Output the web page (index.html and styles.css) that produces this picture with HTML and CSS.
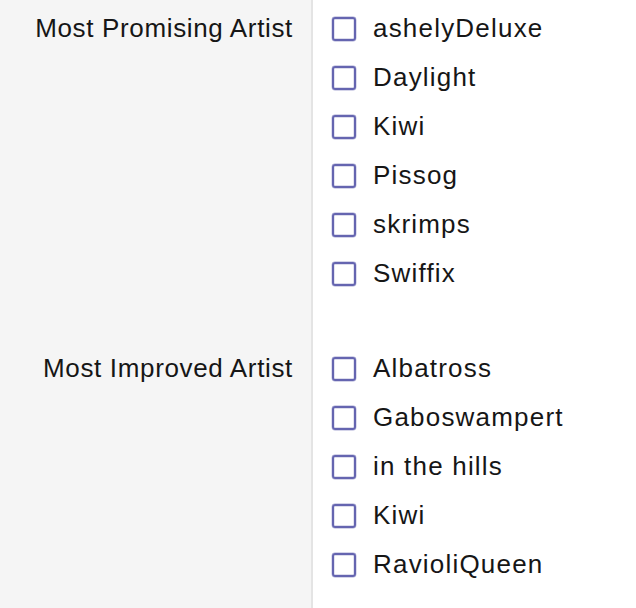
FILE: index.html
```html
<!DOCTYPE html>
<html>
<head>
<meta charset="utf-8">
<link rel="stylesheet" href="styles.css">
</head>
<body>
<div class="form">
  <section class="group">
    <div class="label">Most Promising Artist</div>
    <ul class="options">
      <li class="option"><span class="box"></span><span class="name">ashelyDeluxe</span></li>
      <li class="option"><span class="box"></span><span class="name">Daylight</span></li>
      <li class="option"><span class="box"></span><span class="name">Kiwi</span></li>
      <li class="option"><span class="box"></span><span class="name">Pissog</span></li>
      <li class="option"><span class="box"></span><span class="name">skrimps</span></li>
      <li class="option"><span class="box"></span><span class="name">Swiffix</span></li>
    </ul>
  </section>
  <section class="group">
    <div class="label">Most Improved Artist</div>
    <ul class="options">
      <li class="option"><span class="box"></span><span class="name">Albatross</span></li>
      <li class="option"><span class="box"></span><span class="name">Gaboswampert</span></li>
      <li class="option"><span class="box"></span><span class="name">in the hills</span></li>
      <li class="option"><span class="box"></span><span class="name">Kiwi</span></li>
      <li class="option"><span class="box"></span><span class="name">RavioliQueen</span></li>
    </ul>
  </section>
</div>
</body>
</html>
```
FILE: styles.css
```css
html, body {
  margin: 0;
  padding: 0;
  background: #ffffff;
}
body {
  font-family: "Liberation Sans", Arial, sans-serif;
  color: #161616;
  font-size: 26px;
}
.form {
  display: flex;
  flex-direction: column;
  min-height: 608px;
}
.group {
  display: flex;
}
.group:last-child {
  flex: 1;
}
.label {
  width: 293px;
  flex: none;
  padding: 4px 18px 42px 0;
  text-align: right;
  line-height: 49px;
  letter-spacing: 0.65px;
  background: #f5f5f5;
  border-right: 2px solid #e4e4e4;
  white-space: nowrap;
}
.options {
  list-style: none;
  margin: 0;
  padding: 4px 0 42px 19px;
}
.option {
  display: flex;
  align-items: center;
  height: 49px;
  gap: 17px;
}
.box {
  width: 20px;
  height: 20px;
  border: 2px solid #6565b0;
  border-radius: 3px;
  box-shadow: 0 0 0.6px 0.4px rgba(101, 101, 176, 0.55), inset 0 0 0.6px 0.4px rgba(101, 101, 176, 0.45);
  flex: none;
}
.name {
  letter-spacing: 1.2px;
  line-height: 49px;
}
```
